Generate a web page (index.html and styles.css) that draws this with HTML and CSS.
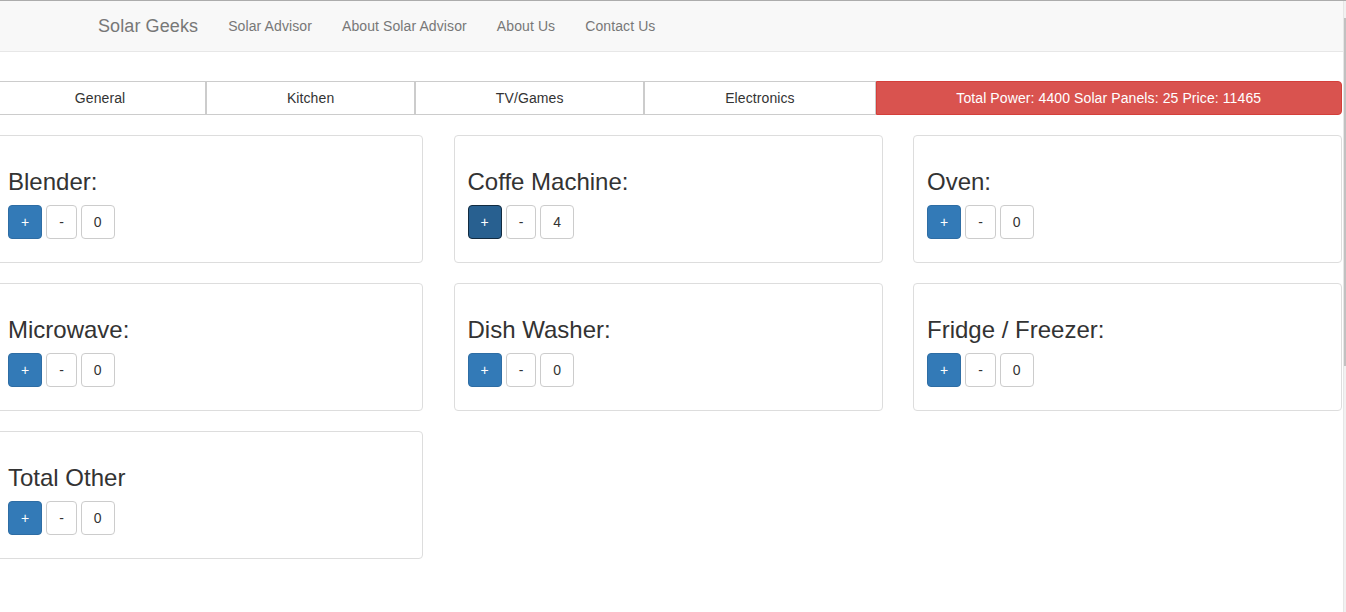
FILE: index.html
```html
<!DOCTYPE html>
<html lang="en">
<head>
<meta charset="utf-8">
<title>Solar Geeks</title>
<link rel="stylesheet" href="styles.css">
</head>
<body>
<div class="window">
  <div class="page">
    <nav class="navbar">
      <a class="brand" href="#">Solar Geeks</a>
      <ul class="nav">
        <li><a href="#">Solar Advisor</a></li>
        <li><a href="#">About Solar Advisor</a></li>
        <li><a href="#">About Us</a></li>
        <li><a href="#">Contact Us</a></li>
      </ul>
    </nav>
    <div class="content">
      <div class="tabs">
        <button class="tab">General</button>
        <button class="tab">Kitchen</button>
        <button class="tab">TV/Games</button>
        <button class="tab">Electronics</button>
        <button class="tab tab-total">Total Power: 4400 Solar Panels: 25 Price: 11465</button>
      </div>
      <div class="grid">
        <div class="card">
          <h3>Blender:</h3>
          <div class="controls"><button class="btn btn-primary">+</button><button class="btn">-</button><button class="btn">0</button></div>
        </div>
        <div class="card">
          <h3>Coffe Machine:</h3>
          <div class="controls"><button class="btn btn-primary active">+</button><button class="btn">-</button><button class="btn">4</button></div>
        </div>
        <div class="card">
          <h3>Oven:</h3>
          <div class="controls"><button class="btn btn-primary">+</button><button class="btn">-</button><button class="btn">0</button></div>
        </div>
        <div class="card">
          <h3>Microwave:</h3>
          <div class="controls"><button class="btn btn-primary">+</button><button class="btn">-</button><button class="btn">0</button></div>
        </div>
        <div class="card">
          <h3>Dish Washer:</h3>
          <div class="controls"><button class="btn btn-primary">+</button><button class="btn">-</button><button class="btn">0</button></div>
        </div>
        <div class="card">
          <h3>Fridge / Freezer:</h3>
          <div class="controls"><button class="btn btn-primary">+</button><button class="btn">-</button><button class="btn">0</button></div>
        </div>
        <div class="card">
          <h3>Total Other</h3>
          <div class="controls"><button class="btn btn-primary">+</button><button class="btn">-</button><button class="btn">0</button></div>
        </div>
      </div>
    </div>
  </div>
  <div class="scrollbar"><div class="thumb"></div></div>
</div>
</body>
</html>
```
FILE: styles.css
```css
* { box-sizing: border-box; }
html, body { margin: 0; padding: 0; }
body {
  font-family: "Liberation Sans", Arial, Helvetica, sans-serif;
  font-size: 14px;
  line-height: 20px;
  color: #333;
  background: #fff;
  border-top: 1px solid #acacac;
  height: 612px;
  overflow: hidden;
}
.window {
  display: flex;
  height: 611px;
}
.page {
  width: 1343px;
  flex: none;
  overflow: hidden;
}
.scrollbar {
  width: 3px;
  flex: none;
  background: #f1f1f1;
  border-left: 1px solid #e6e6e6;
  padding-top: 17px;
}
.thumb {
  width: 2px;
  height: 348px;
  background: #c1c1c1;
}
.navbar {
  display: flex;
  align-items: center;
  height: 51px;
  background: #f8f8f8;
  border-bottom: 1px solid #e7e7e7;
  padding-left: 83px;
}
.brand {
  display: block;
  padding: 15px;
  font-size: 18px;
  line-height: 20px;
  letter-spacing: 0.1px;
  color: #777;
  text-decoration: none;
}
.nav {
  display: flex;
  list-style: none;
  margin: 0;
  padding: 0;
}
.nav a {
  display: block;
  padding: 15px;
  letter-spacing: 0.1px;
  color: #777;
  text-decoration: none;
}
.content {
  margin-left: -6px;
  width: 1348px;
  padding-top: 29px;
}
.tabs {
  display: flex;
  margin-bottom: 20px;
}
.tab {
  flex: 1 1 auto;
  font: inherit;
  letter-spacing: 0.1px;
  height: 34px;
  padding: 6px 12px;
  background: #fff;
  color: #333;
  border: 1px solid #ccc;
  border-radius: 0;
  white-space: nowrap;
}
.tab-total {
  background: #d9534f;
  border-color: #d43f3a;
  color: #fff;
  border-radius: 0 4px 4px 0;
}
.grid {
  display: grid;
  grid-template-columns: repeat(3, 1fr);
  column-gap: 30.5px;
  row-gap: 20px;
}
.card {
  border: 1px solid #ddd;
  border-radius: 4px;
  padding: 13px 13px 23px;
  height: 128px;
}
.card h3 {
  margin: 20px 0 10px;
  font-size: 24px;
  line-height: 26px;
  font-weight: 400;
  color: #333;
}
.controls {
  display: flex;
  gap: 4px;
}
.btn {
  font: inherit;
  height: 34px;
  padding: 6px 12px;
  background: #fff;
  color: #333;
  border: 1px solid #ccc;
  border-radius: 4px;
}
.btn-primary {
  background: #337ab7;
  border-color: #2e6da4;
  color: #fff;
}
.btn-primary.active {
  background: #286090;
  border-color: #122b40;
}
```
